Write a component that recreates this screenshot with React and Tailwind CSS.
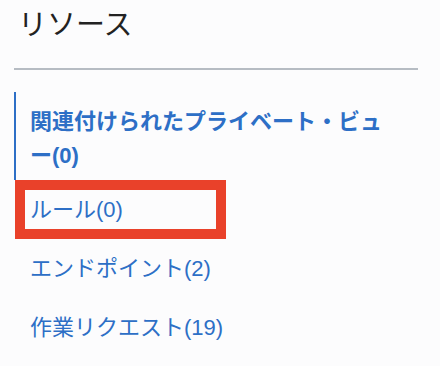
import React from 'react'

const items = [
  { label: 'ルール(0)', marked: true },
  { label: 'エンドポイント(2)' },
  { label: '作業リクエスト(19)' }
]

const App = () => {
  return (
    <div
      className="w-[440px] h-[366px] overflow-hidden bg-[#fcfcfd] px-[14px]"
      style={{ fontFamily: '"Liberation Sans", "Noto Sans CJK JP", sans-serif' }}
    >
      <h2 className="pl-[4px] pt-[8px] text-[29px] leading-[34px] font-normal text-[#222]">リソース</h2>
      <div className="mt-[26px] w-[404px] h-[2px] bg-[#b6bcc3]"></div>

      <nav className="mt-[22px] flex flex-col">
        {/* active */}
        <div className="border-l-2 border-[#2d6fc6] pl-[14px] pt-[13px] pb-[7px] pr-[30px] text-[22px] leading-[34px] font-bold text-[#2d6fc6]">
          関連付けられたプライベート・ビュー(0)
        </div>

        {items.map((item) => (
          <div
            key={item.label}
            className="relative h-[59px] flex items-center pl-[16px] text-[22px] leading-[34px] text-[#2d6fc6]"
          >
            {item.label}
            {item.marked && (
              <div className="absolute left-[1px] top-0 w-[211px] h-[59px] border-[10px] border-[#e9412a]"></div>
            )}
          </div>
        ))}
      </nav>
    </div>
  )
}

export default App
